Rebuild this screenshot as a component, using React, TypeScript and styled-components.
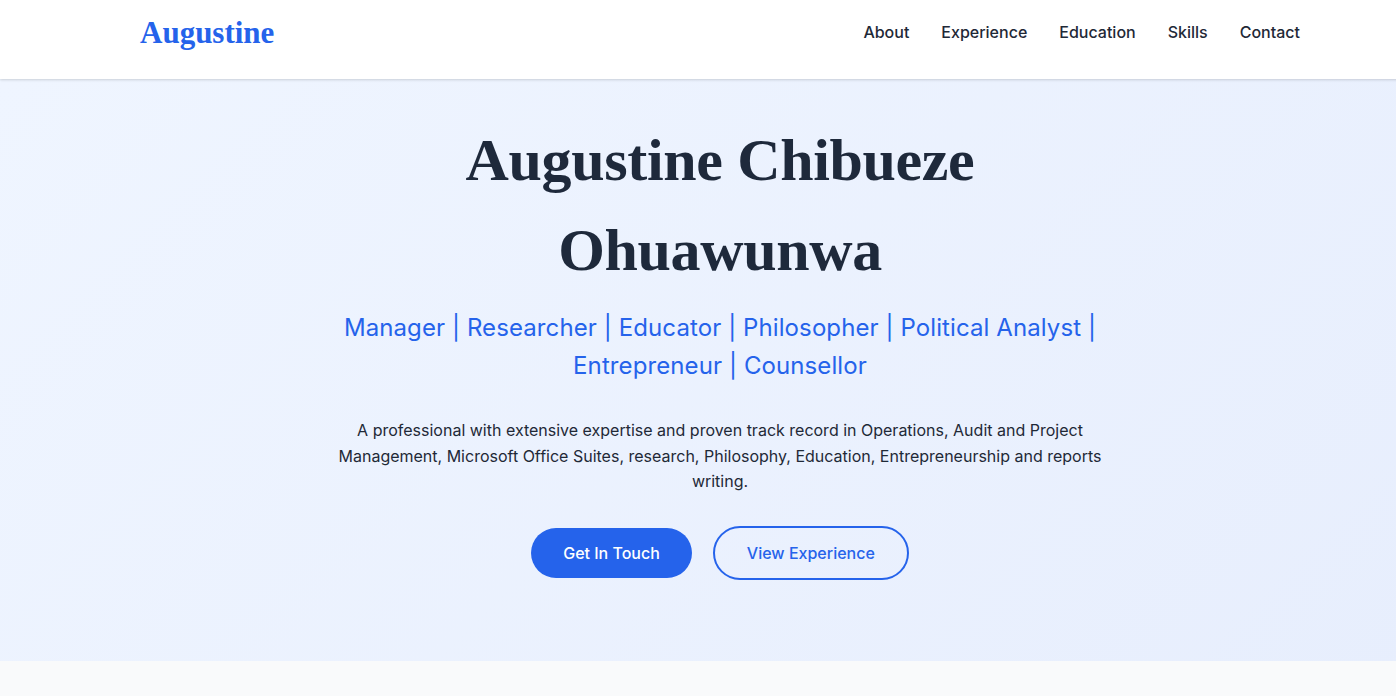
import React from "react";
import styled, { createGlobalStyle } from "styled-components";

const Global = createGlobalStyle`
  html, body { margin: 0; padding: 0; overflow-x: hidden; }
  body { font-family: Inter, "Noto Sans", sans-serif; background: #f9fafb; color: #1f2937; }
  * { box-sizing: border-box; }
`;

const Page = styled.div`
  width: 1440px;
  min-height: 696px;
  background: #f9fafb;
`;

const Header = styled.header`
  position: relative;
  z-index: 2;
  height: 79px;
  padding-bottom: 15px;
  background: #ffffff;
  box-shadow: 0 1px 3px rgba(0, 0, 0, 0.1), 0 1px 2px rgba(0, 0, 0, 0.06);
`;

const HeaderInner = styled.div`
  height: 64px;
  padding: 0 140px;
  display: flex;
  align-items: center;
  justify-content: space-between;
`;

const Logo = styled.a`
  font-family: "Liberation Serif", "Times New Roman", serif;
  font-weight: 700;
  font-size: 31px;
  color: #2563eb;
  text-decoration: none;
  margin-top: 1px;
`;

const Nav = styled.nav`
  display: flex;
  gap: 32px;
`;

const NavLink = styled.a`
  font-size: 16px;
  font-weight: 500;
  color: #1f2937;
  text-decoration: none;
`;

const Hero = styled.section`
  background: linear-gradient(135deg, #eff5ff 0%, #e7eefd 100%);
  padding: 36px 0 81px;
  display: flex;
  flex-direction: column;
  align-items: center;
  text-align: center;
`;

const Title = styled.h1`
  margin: 0;
  font-family: "Liberation Serif", "Times New Roman", serif;
  font-weight: 700;
  font-size: 60px;
  line-height: 90px;
  letter-spacing: -0.35px;
  color: #1e293b;
  max-width: 560px;
`;

const Roles = styled.p`
  margin: 14px 0 0;
  max-width: 768px;
  font-size: 24px;
  line-height: 38px;
  letter-spacing: 0.1px;
  color: #2563eb;
`;

const Summary = styled.p`
  margin: 33px 0 0;
  max-width: 768px;
  font-size: 16px;
  line-height: 25.6px;
  color: #1f2937;
`;

const Actions = styled.div`
  margin-top: 31px;
  display: flex;
  align-items: center;
  gap: 21px;
`;

const Button = styled.a<{ $outline?: boolean }>`
  display: inline-block;
  padding: 12px 32px;
  border-radius: 9999px;
  font-size: 16px;
  font-weight: 500;
  line-height: 26px;
  text-decoration: none;
  background: ${(p) => (p.$outline ? "transparent" : "#2563eb")};
  color: ${(p) => (p.$outline ? "#2563eb" : "#ffffff")};
  border: ${(p) => (p.$outline ? "2px solid #2563eb" : "none")};
`;

const NextSection = styled.section`
  height: 200px;
  background: #f9fafb;
`;

const navItems = ["About", "Experience", "Education", "Skills", "Contact"];

export default function App() {
  return (
    <Page>
      <Global />
      <Header>
        <HeaderInner>
          <Logo href="#">Augustine</Logo>
          <Nav>
            {navItems.map((n) => (
              <NavLink key={n} href={`#${n.toLowerCase()}`}>
                {n}
              </NavLink>
            ))}
          </Nav>
        </HeaderInner>
      </Header>
      <Hero>
        <Title>Augustine Chibueze Ohuawunwa</Title>
        <Roles>
          Manager | Researcher | Educator | Philosopher | Political Analyst | Entrepreneur | Counsellor
        </Roles>
        <Summary>
          A professional with extensive expertise and proven track record in Operations, Audit and Project
          Management, Microsoft Office Suites, research, Philosophy, Education, Entrepreneurship and reports
          writing.
        </Summary>
        <Actions>
          <Button href="#contact">Get In Touch</Button>
          <Button href="#experience" $outline>
            View Experience
          </Button>
        </Actions>
      </Hero>
      <NextSection />
    </Page>
  );
}
